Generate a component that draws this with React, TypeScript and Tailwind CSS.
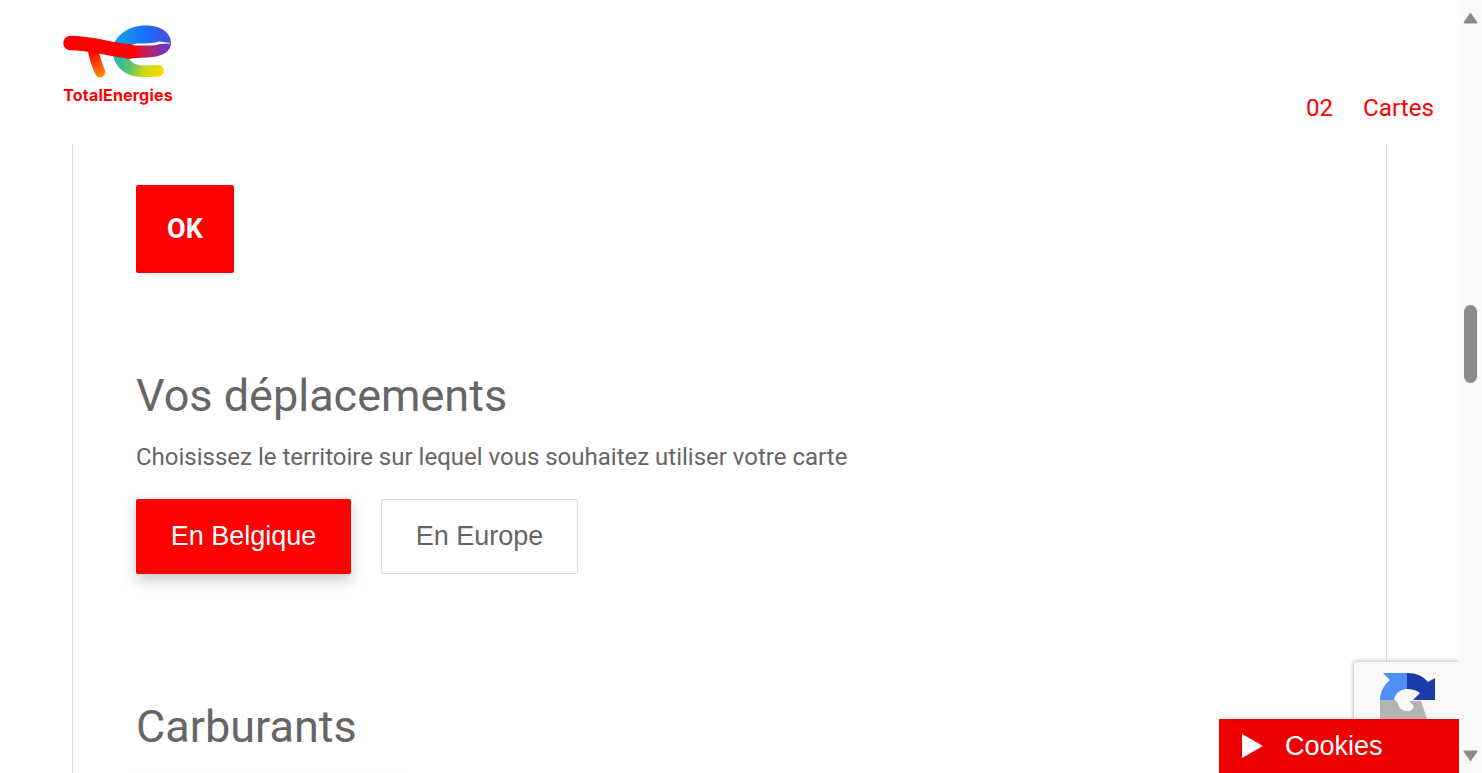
export default function App() {
  return (
    <div className="relative flex h-[773px] w-full overflow-hidden bg-white font-['Roboto',sans-serif]">
      <div className="relative flex h-full w-[1459px] flex-col">
        <header className="flex h-[144px] shrink-0 items-start justify-between">
          <div className="ml-[62px] mt-[24px] flex w-[112px] flex-col items-center">
            <svg width="112" height="56" viewBox="62 24 112 56" fill="none">
              <defs>
                <linearGradient id="bar" gradientUnits="userSpaceOnUse" x1="130" y1="52" x2="171" y2="46">
                  <stop offset="0" stopColor="#ff0000" />
                  <stop offset="0.45" stopColor="#b5226f" />
                  <stop offset="1" stopColor="#5a3bd8" />
                </linearGradient>
                <linearGradient id="top" gradientUnits="userSpaceOnUse" x1="171" y1="38" x2="114" y2="46">
                  <stop offset="0" stopColor="#4a4be0" />
                  <stop offset="0.4" stopColor="#1a6cfa" />
                  <stop offset="1" stopColor="#12a8e8" />
                </linearGradient>
                <linearGradient id="low" gradientUnits="userSpaceOnUse" x1="116" y1="50" x2="160" y2="72">
                  <stop offset="0" stopColor="#14b8c8" />
                  <stop offset="0.4" stopColor="#5cc36a" />
                  <stop offset="0.7" stopColor="#c8d820" />
                  <stop offset="1" stopColor="#fbd800" />
                </linearGradient>
                <linearGradient id="stem" gradientUnits="userSpaceOnUse" x1="92" y1="52" x2="100" y2="76">
                  <stop offset="0" stopColor="#ff0000" />
                  <stop offset="1" stopColor="#ff8a00" />
                </linearGradient>
              </defs>
              <path d="M112.500 48H127C127 52 128 57 130 60C133 64 138 65.500 145 65.500L157 65A5.800 5.800 0 0 1 159 76.500C152 77 148 77 142 77C124 77 112 65 112.500 48Z" fill="url(#low)" />
              <path d="M112.500 50C114 36 128 25.500 146 25.500C160 25.500 171 32 171 43L159 41.500C155 43 148 43.500 140 43.500C132 43.500 128 46 127 50Z" fill="url(#top)" />
              <path d="M126 45.500L148 45.500C153 45.500 157 45 159.500 44L171 43.500C171 50 164 57 148 57.500L126 58.500Z" fill="url(#bar)" />
              <path d="M93 50C95 58 96.500 65 100 72" stroke="url(#stem)" strokeWidth="10.500" strokeLinecap="round" />
              <path d="M70.500 43C90 43 110 49.500 130 51.500" stroke="#ff0000" strokeWidth="14.500" strokeLinecap="round" />
            </svg>
            <span className="mt-[5px] font-['Inter',sans-serif] text-[16px] leading-[20px] font-bold tracking-[0.2px] text-[#ff0000]">TotalEnergies</span>
          </div>
          <nav className="mr-[25px] mt-[94px] flex gap-[30px] text-[24.2px] leading-[28px] text-[#ff0000]">
            <span>02</span>
            <span>Cartes</span>
          </nav>
        </header>
        <main className="mx-[72px] w-[1315px] flex-1 border-x border-[#dddddd] pl-[63px] pt-[41px]">
          <button className="flex h-[88px] w-[98px] items-center justify-center rounded-[2px] bg-[#ff0000] pt-[1px] text-[27px] font-bold text-white">OK</button>
          <h2 className="mt-[95px] text-[45px] leading-[56px] text-[#666666]">Vos déplacements</h2>
          <p className="mt-[19px] text-[24px] leading-[28px] text-[#666666]">Choisissez le territoire sur lequel vous souhaitez utiliser votre carte</p>
          <div className="mt-[28px] flex gap-[30px] font-['Liberation_Sans',sans-serif] text-[27px]">
            <button className="flex h-[75px] w-[215px] items-center justify-center rounded-[2px] bg-[#ff0000] text-white shadow-[0_6px_14px_rgba(0,0,0,0.22)]">En Belgique</button>
            <button className="flex h-[75px] w-[197px] items-center justify-center rounded-[2px] border border-[#dddddd] bg-white text-[#666666]">En Europe</button>
          </div>
          <h2 className="mt-[125px] text-[45px] leading-[56px] text-[#666666]">Carburants</h2>
          <div className="mt-[18px] h-[10px] w-[264px] rounded-[2px] shadow-[0_0_3px_rgba(0,0,0,0.06)]" />
        </main>
        <div className="absolute left-[1354px] top-[662px] h-[70px] w-[105px] rounded-tl-[3px] bg-[#f9f9f9] shadow-[0_0_5px_rgba(128,128,128,0.7)]">
          <svg className="absolute left-[24px] top-[9px]" width="58" height="60" viewBox="1378 671 58 60">
            <path d="M1383 673H1407V689C1400 689 1395 694 1394 700H1380C1380 692 1384 685 1390 680Z" fill="#4f8ff5" />
            <path d="M1407 673C1416 673 1423 676 1428 682L1435 678V700H1413L1420 693C1416 690 1412 689 1407 689Z" fill="#1c3aa9" />
            <path d="M1380 700H1395L1398 703C1398 708 1402 711 1408 711C1411 711 1413 709 1414 706L1409 701H1421L1427 719V731H1380Z" fill="#b3b3b3" />
          </svg>
        </div>
        <div className="absolute bottom-0 left-[1219px] flex h-[54px] w-[240px] items-center bg-[#ee0000] pl-[23px] font-['Liberation_Sans',sans-serif] text-[27px] text-white">
          <svg width="21" height="24" viewBox="0 0 21 24" fill="white"><path d="M0 0L21 12L0 24Z" /></svg>
          <span className="ml-[22px]">Cookies</span>
        </div>
      </div>
      <div className="relative h-full w-[23px] shrink-0 bg-[#fafafa]">
        <svg className="absolute left-[4px] top-[12px]" width="15" height="12" viewBox="0 0 15 12" fill="#8a8a8a"><path d="M7.500 0.500L14.500 10.500Q14.500 11.500 13.500 11.500H1.500Q0.500 11.500 0.500 10.500Z" /></svg>
        <div className="absolute left-[5px] top-[305px] h-[78px] w-[13px] rounded-full bg-[#8a8a8a]" />
        <svg className="absolute left-[4px] top-[750px]" width="15" height="12" viewBox="0 0 15 12" fill="#8a8a8a"><path d="M7.500 11.500L14.500 1.500Q14.500 0.500 13.500 0.500H1.500Q0.500 0.500 0.500 1.500Z" /></svg>
      </div>
    </div>
  );
}
